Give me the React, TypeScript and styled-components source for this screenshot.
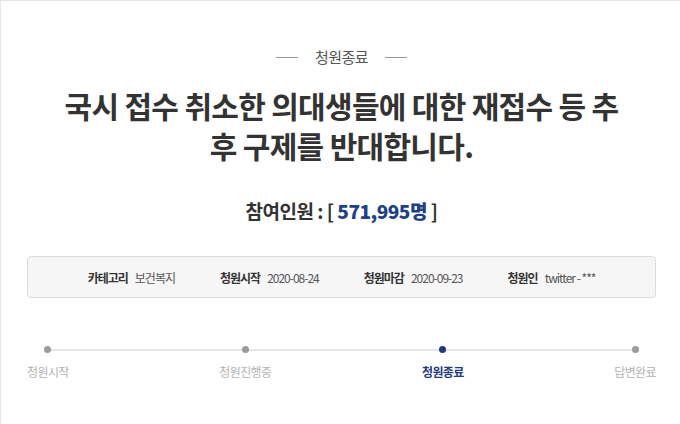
import styled, { createGlobalStyle } from "styled-components";

const GlobalStyle = createGlobalStyle`
  html, body {
    margin: 0;
    padding: 0;
    background: #fff;
  }
  body {
    font-family: "Noto Sans CJK KR", "Noto Sans", sans-serif;
    color: #333;
  }
`;

const Page = styled.div`
  box-sizing: border-box;
  width: 680px;
  height: 424px;
  border-top: 1px solid #e6e6e6;
  border-left: 1px solid #e6e6e6;
  padding: 46px 24px 0 26px;
  overflow: hidden;
`;

const StatusLabel = styled.div`
  display: flex;
  align-items: center;
  justify-content: center;
  gap: 17px;
  font-size: 15px;
  line-height: 20px;
  letter-spacing: -0.5px;
  color: #555;

  &::before,
  &::after {
    content: "";
    width: 22px;
    height: 1px;
    background: #999;
  }
`;

const Title = styled.h1`
  margin: 18px 0 0;
  text-align: center;
  font-size: 30px;
  line-height: 40px;
  font-weight: 700;
  letter-spacing: -0.7px;
  color: #333;
`;

const Count = styled.div`
  margin-top: 34px;
  text-align: center;
  font-size: 19px;
  line-height: 24px;
  font-weight: 700;
  letter-spacing: -0.5px;
  color: #333;

  strong {
    color: #1f3f86;
  }
`;

const InfoBox = styled.div`
  box-sizing: border-box;
  margin-top: 33px;
  height: 42px;
  display: flex;
  align-items: center;
  justify-content: center;
  gap: 45px;
  background: #f6f6f6;
  border: 1px solid #dcdcdc;
  border-radius: 4px;
`;

const InfoItem = styled.div`
  display: flex;
  align-items: center;
  gap: 7px;
  font-size: 12px;
  letter-spacing: -1px;
`;

const InfoLabel = styled.span`
  font-weight: 700;
  color: #333;
`;

const InfoValue = styled.span`
  color: #555;
`;

const Steps = styled.div`
  position: relative;
  margin-top: 48px;
  display: flex;
  justify-content: space-between;

  &::before {
    content: "";
    position: absolute;
    top: 3px;
    left: 21px;
    right: 22px;
    height: 2px;
    background: #e6e6e6;
  }
`;

const Step = styled.div<{ $active?: boolean }>`
  position: relative;
  display: flex;
  flex-direction: column;
  align-items: center;
  gap: 11px;
  font-size: 12px;
  line-height: 16px;
  letter-spacing: -0.6px;
  font-weight: ${(p) => (p.$active ? 700 : 400)};
  color: ${(p) => (p.$active ? "#1f3c80" : "#b3b3b3")};
`;

const Dot = styled.span<{ $active?: boolean }>`
  width: 7px;
  height: 7px;
  border-radius: 50%;
  background: ${(p) => (p.$active ? "#1d3b80" : "#9b9b9b")};
`;

const info = [
  { label: "카테고리", value: "보건복지" },
  { label: "청원시작", value: "2020-08-24" },
  { label: "청원마감", value: "2020-09-23" },
  { label: "청원인", value: "twitter - ***" },
];

const steps = ["청원시작", "청원진행중", "청원종료", "답변완료"];

export default function App() {
  return (
    <>
      <GlobalStyle />
      <Page>
        <StatusLabel>청원종료</StatusLabel>
        <Title>
          국시 접수 취소한 의대생들에 대한 재접수 등 추
          <br />
          후 구제를 반대합니다.
        </Title>
        <Count>
          참여인원 : [ <strong>571,995명</strong> ]
        </Count>
        <InfoBox>
          {info.map((i) => (
            <InfoItem key={i.label}>
              <InfoLabel>{i.label}</InfoLabel>
              <InfoValue>{i.value}</InfoValue>
            </InfoItem>
          ))}
        </InfoBox>
        <Steps>
          {steps.map((s, idx) => (
            <Step key={s} $active={idx === 2}>
              <Dot $active={idx === 2} />
              {s}
            </Step>
          ))}
        </Steps>
      </Page>
    </>
  );
}
